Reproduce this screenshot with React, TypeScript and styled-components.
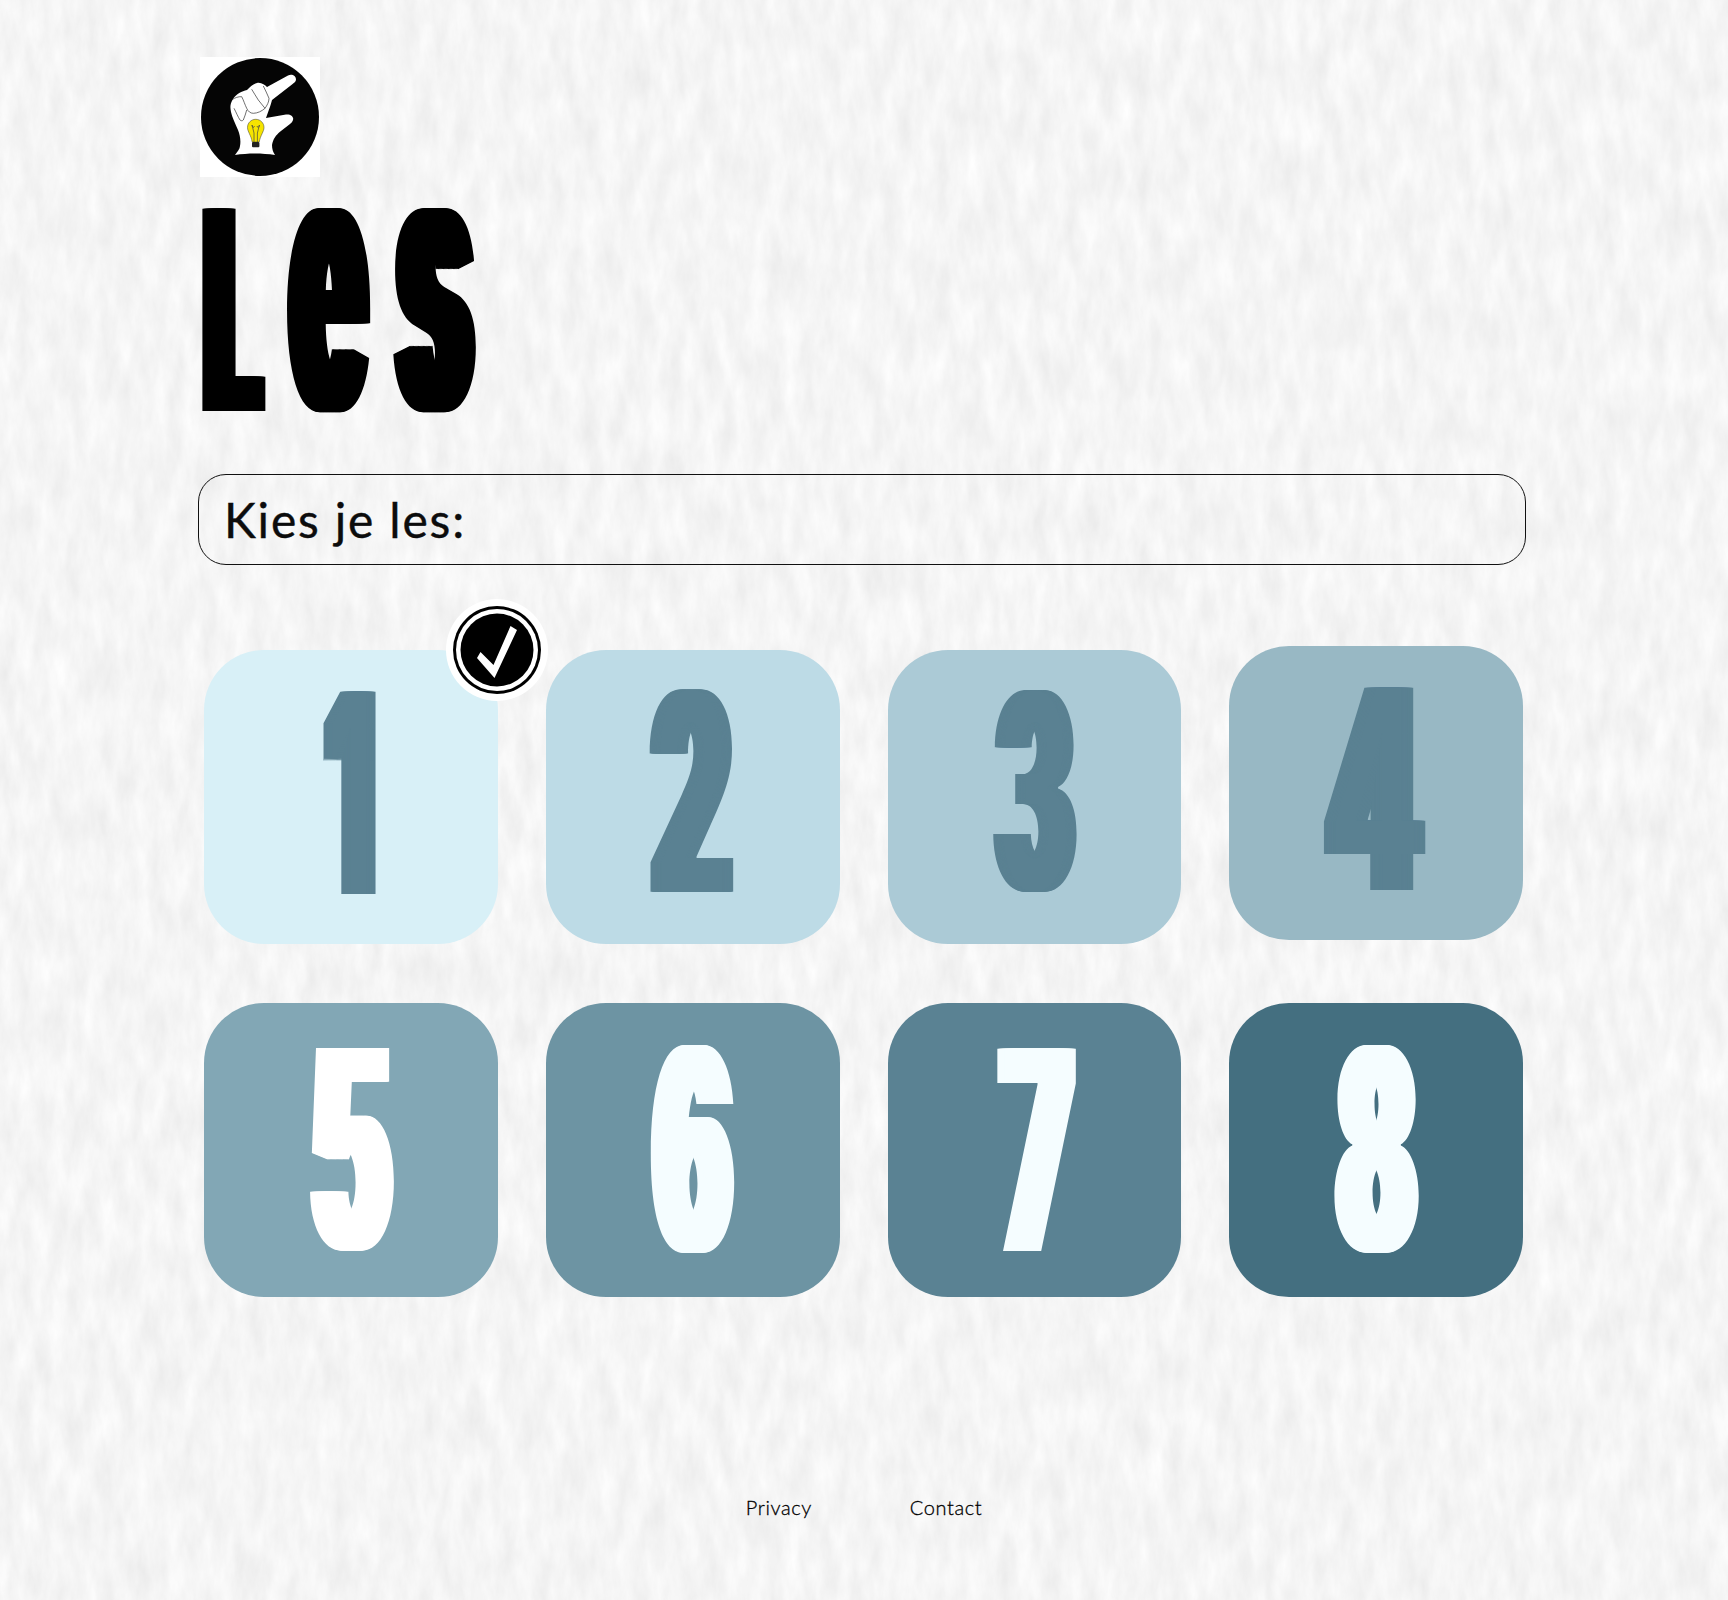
import { createGlobalStyle } from "styled-components";
import styled from "styled-components";

const paperSvg = `<svg xmlns="http://www.w3.org/2000/svg" width="1728" height="1600"><filter id="q" x="0" y="0" width="100%" height="100%" color-interpolation-filters="sRGB"><feTurbulence type="fractalNoise" baseFrequency="0.06 0.02" numOctaves="5" seed="7"/><feColorMatrix values="0.085 0 0 0 0.918 0.085 0 0 0 0.918 0.085 0 0 0 0.918 0 0 0 0 1"/></filter><rect width="1728" height="1600" filter="url(#q)"/></svg>`;

// the display face in the design is an ultra-condensed poster font; none is installed,
// so stems get thickened sideways with hard shadows and the glyph is stretched up
const spreadShadow = (spread: number, ink: string) =>
  Array.from({ length: spread }, (_, i) => `${i + 1}px 0 ${ink}, -${i + 1}px 0 ${ink}`).join(", ");

const GlobalStyle = createGlobalStyle`
  html, body {
    margin: 0;
    padding: 0;
  }
  body {
    background-color: #f5f5f5;
    font-family: "Lato", "Liberation Sans", sans-serif;
  }
`;

const Page = styled.div`
  width: 1728px;
  min-height: 1600px;
  box-sizing: border-box;
  padding-top: 57px;
  background-image: url("data:image/svg+xml,${encodeURIComponent(paperSvg)}");
  background-repeat: no-repeat;
  overflow: hidden;
`;

const Main = styled.main`
  margin-left: 198px;
  width: 1328px;
`;

const Logo = styled.svg`
  display: block;
  width: 120px;
  height: 120px;
  margin-left: 2px;
`;

const Title = styled.h1`
  display: flex;
  height: 202px;
  margin: 31px 0 0 4px;
  gap: 22px;
  font-family: "Inter", "Liberation Sans", sans-serif;
  font-weight: 700;
  font-size: 100px;
  line-height: 202px;
  color: #000;
`;

const Letter = styled.span<{ $w: number; $sx: number; $sy: number; $dx: number; $dy: number; $spread: number }>`
  display: flex;
  justify-content: center;
  width: ${(p) => p.$w}px;
  text-shadow: ${(p) => spreadShadow(p.$spread, "#000")};
  transform: translate(${(p) => p.$dx}px, ${(p) => p.$dy}px) scale(${(p) => p.$sx}, ${(p) => p.$sy});
`;

const PromptBox = styled.div`
  display: flex;
  align-items: center;
  box-sizing: border-box;
  height: 91px;
  margin-top: 64px;
  padding-left: 25px;
  border: 1px solid #111;
  border-radius: 28px;
  font-size: 48px;
  letter-spacing: 1.8px;
  color: #0c0c0c;
  -webkit-text-stroke: 0.4px #0c0c0c;
`;

const Grid = styled.section`
  display: grid;
  grid-template-columns: repeat(4, 293.75px);
  grid-auto-rows: 294px;
  column-gap: 48px;
  row-gap: 59px;
  margin: 85px 0 0 6px;
`;

const Card = styled.a<{ $bg: string; $ink: string; $lift: number }>`
  position: relative;
  display: flex;
  align-items: center;
  justify-content: center;
  margin-top: ${(p) => -p.$lift}px;
  margin-bottom: ${(p) => p.$lift}px;
  border-radius: 60px;
  background: ${(p) => p.$bg};
  color: ${(p) => p.$ink};
  text-shadow: ${(p) => spreadShadow(9, p.$ink)};
  font-family: "Inter", "Liberation Sans", sans-serif;
  font-weight: 700;
  font-size: 100px;
  text-decoration: none;
`;

const Digit = styled.span<{ $sx: number; $sy: number; $dx: number; $dy: number }>`
  display: block;
  line-height: 1;
  transform: translate(${(p) => p.$dx}px, ${(p) => p.$dy}px) scale(${(p) => p.$sx}, ${(p) => p.$sy});
`;

const Badge = styled.svg`
  position: absolute;
  left: 242px;
  top: -51px;
  width: 102px;
  height: 102px;
`;

const Footer = styled.footer`
  display: flex;
  justify-content: center;
  gap: 98px;
  margin-top: 198px;
  font-size: 20px;
  font-weight: 300;
  letter-spacing: 0.6px;
  color: #000;
  -webkit-text-stroke: 0.3px #000;
`;

const FooterLink = styled.a`
  color: inherit;
  text-decoration: none;
`;

const dark = "#5a8192";
const light = "#f5fdff";

const lessons = [
  { n: 1, bg: "#d8f0f7", ink: dark, lift: 0, sx: 1.04, sy: 2.78, dx: 0, dy: -3 },
  { n: 2, bg: "#bddbe6", ink: dark, lift: 0, sx: 1.19, sy: 2.74, dx: -1, dy: -4 },
  { n: 3, bg: "#abcad6", ink: dark, lift: 0, sx: 1.14, sy: 2.7, dx: 0.5, dy: -5 },
  { n: 4, bg: "#98b8c4", ink: dark, lift: 4, sx: 1.33, sy: 2.78, dx: -1.5, dy: -3 },
  { n: 5, bg: "#82a7b5", ink: "#ffffff", lift: 0, sx: 1.18, sy: 2.75, dx: 0, dy: -1 },
  { n: 6, bg: "#6d94a3", ink: light, lift: 0, sx: 1.13, sy: 2.78, dx: 0, dy: 0 },
  { n: 7, bg: "#5a8293", ink: light, lift: 0, sx: 1.14, sy: 2.78, dx: 2.5, dy: 1 },
  { n: 8, bg: "#446f80", ink: light, lift: 0, sx: 1.14, sy: 2.78, dx: 0, dy: 0 },
];

const HandLogo = () => (
  <Logo viewBox="0 0 120 120">
    <rect width="120" height="120" fill="#fff" />
    <circle cx="60" cy="60" r="59" fill="#050505" />
    <path
      d="M57 26 C61 25 65 28 67 30 L88 18.5 C92 16.5 96 19 96 22.5 C96 24.5 94 26 92 27.5 L72 43 C71 47 70 50 69 52.5 L66 61 L86 57.5 C91 57 94 60 93 63 C92.5 65 91 66 90 67 L80 74.7 C76 78 73 82 72 88 C72 92 73 95 75 98 C62 96 48 96 35 98 C37 95 40 92 40 89 C41 84 40 78 38 73 C35 66 32 60 31 55 C30 50 30 47 33 42 C36 37 42 34 47 33 C50 30 53 27 57 26 Z"
      fill="#fff"
    />
    <path
      d="M31.7 43 C35 40.5 38.5 39.5 41.7 39.7 C43.5 43 45 48 46.7 51.3 C48 54.5 50.5 56.3 53.3 56.3 C57.5 56.3 62 54 65 51.3 M51.7 32.3 C54 36 56 39.5 58.3 43 L65 51.3 M63.3 29 C65 33 67.5 37 69 41.3 C69 45 67 48.5 65 51.3 M34 51.3 C36 55 38 60 40 63 C41 64 42.5 64 43.3 63 C44.5 60 46 56 46.7 53"
      fill="none"
      stroke="#222"
      strokeWidth="0.65"
    />
    <path
      d="M55.7 62.3 C60.5 62.3 64 66 64 70.5 C64 74.5 60.5 78 59.2 85 L52.2 85 C51 78 47.5 74.5 47.5 70.5 C47.5 66 51 62.3 55.7 62.3 Z"
      fill="#f6e400"
      stroke="#333"
      strokeWidth="0.5"
    />
    <path d="M52 68 L54 76 L54 85 M59.4 68 L57.4 76 L57.4 85 M52 68 C52.5 71 54 71 54.4 69 M59.4 68 C59 71 57.4 71 57 69" fill="none" stroke="#444" strokeWidth="0.7" />
    <rect x="52" y="85" width="7.4" height="5.3" rx="1" fill="#222" />
  </Logo>
);

const CheckBadge = () => (
  <Badge viewBox="0 0 102 102">
    <circle cx="51" cy="51" r="51" fill="#fff" />
    <circle cx="51" cy="51" r="44" fill="#000" />
    <circle cx="51" cy="51" r="41" fill="#fff" />
    <circle cx="51" cy="51" r="36.5" fill="#000" />
    <polygon points="34.5,53 31,59 48.5,79 71,31 64.5,27 47.5,66" fill="#fff" />
  </Badge>
);

export default function App() {
  return (
    <Page>
      <GlobalStyle />
      <Main>
        <HandLogo />
        <Title>
          <Letter $w={63} $sx={0.95} $sy={2.78} $dx={-1} $dy={2} $spread={10}>L</Letter>
          <Letter $w={83} $sx={1.19} $sy={3.62} $dx={0} $dy={-31} $spread={9}>e</Letter>
          <Letter $w={83} $sx={1.24} $sy={3.62} $dx={1} $dy={-31} $spread={9}>s</Letter>
        </Title>
        <PromptBox>Kies je les:</PromptBox>
        <Grid>
          {lessons.map((l) => (
            <Card key={l.n} href="#" $bg={l.bg} $ink={l.ink} $lift={l.lift}>
              <Digit $sx={l.sx} $sy={l.sy} $dx={l.dx} $dy={l.dy}>{l.n}</Digit>
              {l.n === 1 && <CheckBadge />}
            </Card>
          ))}
        </Grid>
      </Main>
      <Footer>
        <FooterLink href="#">Privacy</FooterLink>
        <FooterLink href="#">Contact</FooterLink>
      </Footer>
    </Page>
  );
}
